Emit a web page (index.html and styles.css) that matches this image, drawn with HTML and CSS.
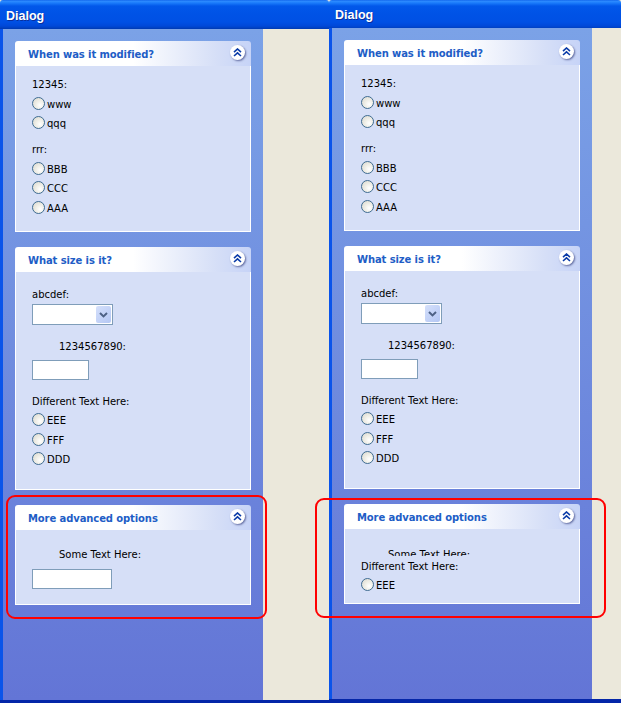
FILE: index.html
```html
<!DOCTYPE html>
<html lang="en">
<head>
<meta charset="utf-8">
<title>Dialog</title>
<link rel="stylesheet" href="styles.css">
</head>
<body>
<svg class="defs" width="0" height="0" aria-hidden="true">
  <symbol id="chev2" viewBox="0 0 9 9"><path d="M1 4.2 4.5 1 8 4.2M1 8 4.5 4.8 8 8" fill="none" stroke="#0a3ba8" stroke-width="1.6"/></symbol>
  <symbol id="chevd" viewBox="0 0 9 6"><path d="M1 1 4.5 4.4 8 1" fill="none" stroke="#4d6185" stroke-width="2"/></symbol>
</svg>
<div class="page">
  <div class="window win-left">
    <div class="title">Dialog</div>
    <div class="client">
      <div class="sidebar">
        <section class="panel p1">
          <header class="head"><span>When was it modified?</span><button class="collapse"><svg width="9" height="9"><use href="#chev2"/></svg></button></header>
          <div class="content">
            <div class="row">12345:</div>
            <div class="row r19 opt"><i class="radio"></i>www</div>
            <div class="row r19 opt"><i class="radio"></i>qqq</div>
            <div class="row sep">rrr:</div>
            <div class="row r19 opt"><i class="radio"></i>BBB</div>
            <div class="row r19 opt"><i class="radio"></i>CCC</div>
            <div class="row r21 opt"><i class="radio"></i>AAA</div>
          </div>
        </section>
        <section class="panel p2">
          <header class="head"><span>What size is it?</span><button class="collapse"><svg width="9" height="9"><use href="#chev2"/></svg></button></header>
          <div class="content">
            <div class="row sp-top">abcdef:</div>
            <div class="select"><span class="drop"><svg width="9" height="6"><use href="#chevd"/></svg></span></div>
            <div class="row ind sp-a">1234567890:</div>
            <div class="input short"></div>
            <div class="row r19 sp-b">Different Text Here:</div>
            <div class="row r19 opt"><i class="radio"></i>EEE</div>
            <div class="row r19 opt sp-1"><i class="radio"></i>FFF</div>
            <div class="row r19 opt"><i class="radio"></i>DDD</div>
          </div>
        </section>
        <section class="panel p3">
          <header class="head"><span>More advanced options</span><button class="collapse"><svg width="9" height="9"><use href="#chev2"/></svg></button></header>
          <div class="content">
            <div class="row ind sp-c">Some Text Here:</div>
            <div class="input long"></div>
          </div>
        </section>
      </div>
      <div class="fill"></div>
    </div>
  </div>
  <div class="window win-right">
    <div class="title">Dialog</div>
    <div class="client">
      <div class="sidebar">
        <section class="panel p1">
          <header class="head"><span>When was it modified?</span><button class="collapse"><svg width="9" height="9"><use href="#chev2"/></svg></button></header>
          <div class="content">
            <div class="row">12345:</div>
            <div class="row r19 opt"><i class="radio"></i>www</div>
            <div class="row r19 opt"><i class="radio"></i>qqq</div>
            <div class="row sep">rrr:</div>
            <div class="row r19 opt"><i class="radio"></i>BBB</div>
            <div class="row r19 opt"><i class="radio"></i>CCC</div>
            <div class="row r21 opt"><i class="radio"></i>AAA</div>
          </div>
        </section>
        <section class="panel p2">
          <header class="head"><span>What size is it?</span><button class="collapse"><svg width="9" height="9"><use href="#chev2"/></svg></button></header>
          <div class="content">
            <div class="row sp-top">abcdef:</div>
            <div class="select"><span class="drop"><svg width="9" height="6"><use href="#chevd"/></svg></span></div>
            <div class="row ind sp-a">1234567890:</div>
            <div class="input short"></div>
            <div class="row r19 sp-b">Different Text Here:</div>
            <div class="row r19 opt"><i class="radio"></i>EEE</div>
            <div class="row r19 opt sp-1"><i class="radio"></i>FFF</div>
            <div class="row r19 opt"><i class="radio"></i>DDD</div>
          </div>
        </section>
        <section class="panel p3">
          <header class="head"><span>More advanced options</span><button class="collapse"><svg width="9" height="9"><use href="#chev2"/></svg></button></header>
          <div class="content">
            <div class="row ind clipped">Some Text Here:</div>
            <div class="row r19 opt">Different Text Here:</div>
            <div class="row r19 opt"><i class="radio"></i>EEE</div>
          </div>
        </section>
      </div>
      <div class="fill"></div>
    </div>
  </div>
  <div class="note note-left"></div>
  <div class="note note-right"></div>
</div>
</body>
</html>
```
FILE: styles.css
```css
* { box-sizing: border-box; }
html, body { margin: 0; padding: 0; }
body { width: 621px; height: 703px; overflow: hidden; background: #ebe8db; font-family: "DejaVu Sans", sans-serif; font-size: 10px; color: #000; }
.defs { position: absolute; }
.page { position: relative; display: flex; width: 621px; height: 703px; overflow: hidden; }
.window { display: flex; flex-direction: column; height: 703px; }
.win-left { width: 329px; border-bottom: 3px solid #0426a8; }
.win-right { width: 292px; border-bottom: 4px solid #0426a8; }
.title { padding-left: 6px; color: #fff; font-family: "Liberation Sans", Arial, sans-serif; font-weight: bold; font-size: 12.5px; text-shadow: 1px 1px 0 #0a2f9c; border-radius: 3px 3px 0 0;
  background: linear-gradient(180deg, #0a5ce8 0, #2f8dff 1px, #1a7bfb 3px, #0258ea 6px, #0053e6 13px, #0050e4 22px, #0048d8 26px, #0040c0 28px, #0038b0 100%); }
.win-left .title { height: 29px; line-height: 32px; }
.win-right .title { height: 28px; line-height: 31px; }
.client { flex: 1; display: flex; min-height: 0; border-left: 3px solid #0a54ea; }
.sidebar { width: 260px; padding: 12px 12px 0; display: flex; flex-direction: column; gap: 15px; background: linear-gradient(180deg, #7ba2e7 0, #6375d6 100%); }
.fill { flex: 1; background: #ebe8db; }
.panel { width: 236px; border-radius: 3px 3px 0 0; overflow: hidden; display: flex; flex-direction: column; }
.p1 { height: 191px; }
.p2 { height: 243px; }
.p3 { height: 100px; }
.head { height: 25px; flex: none; display: flex; justify-content: space-between; padding: 0 6px 0 13px; background: linear-gradient(90deg, #fff 0, #fff 50%, #d6dff7 85%, #c6d3f7 100%); color: #215dc6; font-weight: bold; font-size: 10px; letter-spacing: -0.1px; line-height: 28px; }
.collapse { width: 15px; height: 15px; margin-top: 4px; padding: 0; border: 0; border-radius: 50%; background: #fff; box-shadow: 1px 1px 2px rgba(60,70,130,.75); display: flex; align-items: center; justify-content: center; }
.content { flex: 1; padding: 8px 16px 0; background: #d6dff7; border: 1px solid #fff; border-top: 0; }
.row { display: flex; align-items: center; height: 20px; white-space: nowrap; }
.r19 { height: 19px; }
.r21 { height: 21px; }
.opt { padding-top: 2px; }
.ind { padding-left: 27px; }
.sep { margin-top: 7px; }
.sp-top { margin-top: 4px; }
.sp-a { margin-top: 11px; margin-bottom: 4px; }
.sp-b { margin-top: 12px; margin-bottom: -1px; }
.sp-1 { margin-top: 1px; }
.sp-c { margin-top: 6px; margin-bottom: 5px; }
.clipped { height: 8px; margin-top: 11px; align-items: flex-start; line-height: 13px; overflow: hidden; }
.radio { flex: none; width: 13px; height: 13px; margin-right: 2px; margin-bottom: 2px; border-radius: 50%; border: 1px solid #3f6c91; background: radial-gradient(circle at 65% 65%, #fff 0, #f0efe8 40%, #d8d6cc 100%); }
.select { position: relative; width: 81px; height: 21px; background: #fff; border: 1px solid #7f9db9; }
.drop { position: absolute; right: 1px; top: 1px; width: 15px; height: 17px; display: flex; align-items: center; justify-content: center; border-radius: 2px; background: linear-gradient(135deg, #d5e0fb 0, #b4c7f4 100%); }
.input { height: 20px; background: #fff; border: 1px solid #7f9db9; }
.short { width: 57px; }
.long { width: 80px; }
.note { position: absolute; border: 2px solid #f00; border-radius: 9px; }
.note-left { left: 6px; top: 495px; width: 261px; height: 124px; }
.note-right { left: 315px; top: 498px; width: 291px; height: 120px; }
```
